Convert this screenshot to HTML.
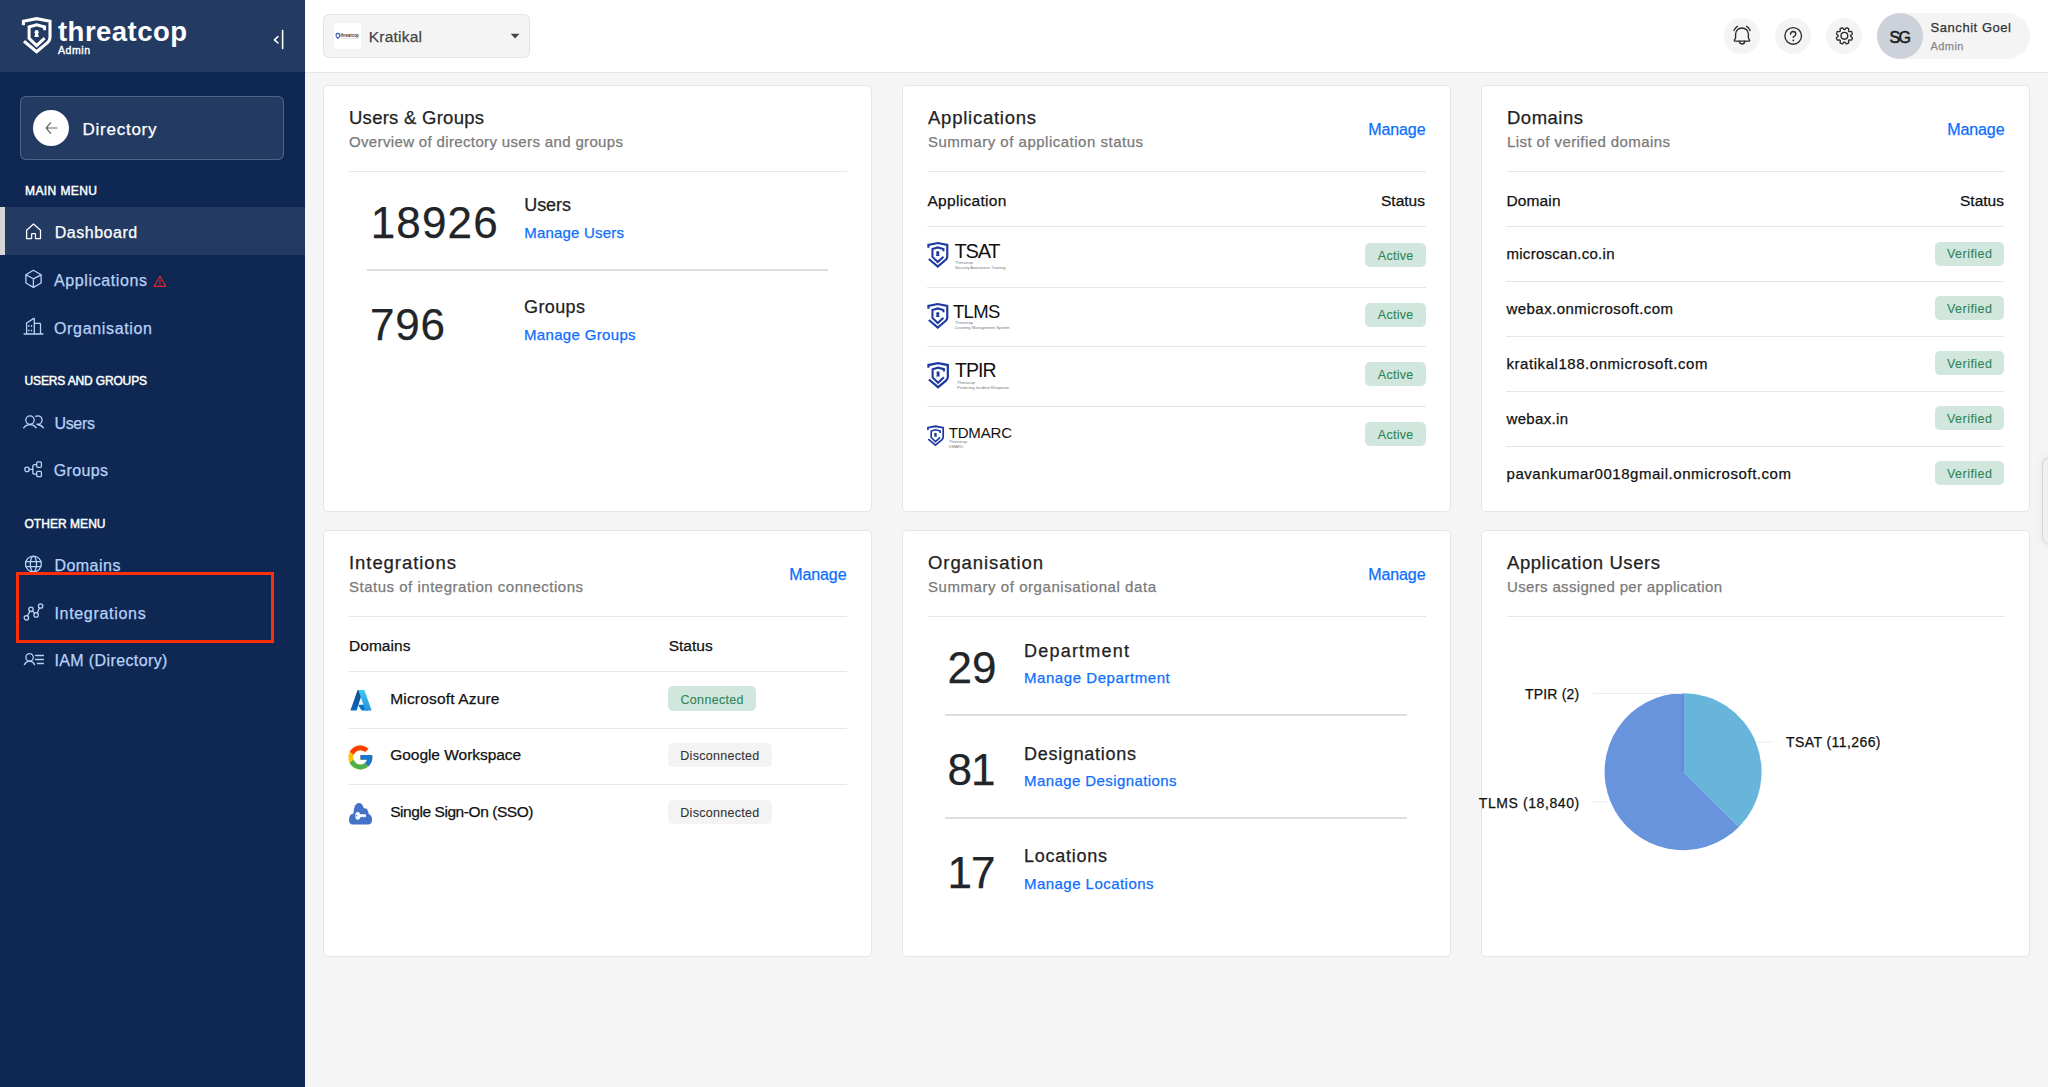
<!DOCTYPE html>
<html><head><meta charset="utf-8"><title>Threatcop Admin - Directory Dashboard</title>
<style>
html,body{margin:0;padding:0;width:2048px;height:1087px;overflow:hidden;background:#f5f5f5;font-family:"Liberation Sans",sans-serif}
.t{position:absolute;white-space:nowrap;-webkit-text-stroke:0.25px currentColor}
svg{overflow:visible}
</style></head><body>
<div style="position:absolute;left:0px;top:0px;width:305px;height:1087px;background:#0f2853"></div>
<div style="position:absolute;left:0px;top:0px;width:305px;height:72px;background:#233a63"></div>
<svg style="position:absolute;left:0;top:0" width="60" height="60" viewBox="0 0 60 60">
<g fill="none" stroke="#fff" stroke-linejoin="miter">
<path d="M23.4 25.2 V21.3 L36.6 18.7 L50 21.3 V37.6 Q50 40.5 47.5 42.6 L36.6 51.8 L24 41.2" stroke-width="3.1"/>
<path d="M44.6 30.3 V27 L36.6 24.9 L29.1 27 V38.3 L36.6 45.6 L44.6 38.2" stroke-width="3"/>
</g>
<circle cx="36.6" cy="32.2" r="2.1" fill="#fff"/>
<path d="M35.5 32.8 H37.7 L38.9 37 H34.3 Z" fill="#fff"/>
</svg>
<div class="t" style="top:18.22px;font-size:27.5px;line-height:27.5px;color:#fff;font-weight:700;-webkit-text-stroke:0;letter-spacing:0.463px;left:58.00px;">threatcop</div>
<div class="t" style="top:45.11px;font-size:10.5px;line-height:10.5px;color:#fff;letter-spacing:0.559px;left:58.00px;-webkit-text-stroke:0.4px #fff">Admin</div>
<svg style="position:absolute;left:268px;top:26px" width="24" height="28" viewBox="0 0 24 28">
<path d="M10 10.5 L6.5 13.8 L10 17" fill="none" stroke="#fff" stroke-width="1.6" stroke-linecap="round" stroke-linejoin="round"/>
<path d="M14.6 4.5 V22.5" stroke="#fff" stroke-width="1.6" stroke-linecap="round"/>
</svg>
<div style="position:absolute;left:20px;top:96px;width:264px;height:64px;background:#233a63;border:1px solid rgba(255,255,255,0.22);border-radius:6px;box-sizing:border-box"></div>
<div style="position:absolute;left:33px;top:110px;width:36px;height:36px;background:#fff;border-radius:50%"></div>
<svg style="position:absolute;left:41px;top:118px" width="20" height="20" viewBox="0 0 20 20">
<path d="M9.6 4.6 L5.2 10 L9.6 15.4 M5.4 10 H16" fill="none" stroke="#666" stroke-width="1.2" stroke-linecap="round" stroke-linejoin="round"/>
</svg>
<div class="t" style="top:120.91px;font-size:17px;line-height:17px;color:#fff;letter-spacing:0.749px;left:82.50px;">Directory</div>
<div class="t" style="top:184.84px;font-size:12px;line-height:12px;color:#fff;letter-spacing:0.417px;left:25.00px;-webkit-text-stroke:0.45px #fff">MAIN MENU</div>
<div style="position:absolute;left:0px;top:207px;width:305px;height:48px;background:#233a63"></div>
<div style="position:absolute;left:0px;top:207px;width:5px;height:48px;background:#d6d6d6"></div>
<svg style="position:absolute;left:20px;top:218px" width="28" height="28" viewBox="0 0 28 28"><g fill="none" stroke="#fff" stroke-width="1.25" stroke-linecap="round" stroke-linejoin="round"><path d="M6.6 20.5 V12.3 L13.5 6 L20.5 12.3 V20.5 H15.5 V16.2 Q15.5 15.6 14.9 15.6 H12.2 Q11.6 15.6 11.6 16.2 V20.5 Z"/></g></svg>
<div class="t" style="top:225.46px;font-size:16px;line-height:16px;color:#fff;letter-spacing:0.528px;left:54.70px;">Dashboard</div>
<svg style="position:absolute;left:20px;top:265px" width="28" height="28" viewBox="0 0 28 28"><g fill="none" stroke="#b8d1f6" stroke-width="1.3" stroke-linecap="round" stroke-linejoin="round"><path d="M13.4 5.3 L21.1 9.8 V18 L13.4 22.4 L5.9 18 V9.8 Z M5.9 9.8 L13.4 13.8 L21.1 9.8 M13.4 13.8 V22.4"/></g></svg>
<div class="t" style="top:273.46px;font-size:16px;line-height:16px;color:#b8d1f6;letter-spacing:0.611px;left:54.00px;">Applications</div>
<svg style="position:absolute;left:152px;top:273px" width="16" height="16" viewBox="0 0 16 16">
<path d="M8 3.3 L13.7 13.3 H2.3 Z" fill="none" stroke="#e0262a" stroke-width="1.2" stroke-linejoin="round"/>
<path d="M8 7 V10" stroke="#e0262a" stroke-width="1.2" stroke-linecap="round"/><circle cx="8" cy="11.7" r="0.7" fill="#e0262a"/>
</svg>
<svg style="position:absolute;left:20px;top:313px" width="28" height="28" viewBox="0 0 28 28"><g fill="none" stroke="#b8d1f6" stroke-width="1.3" stroke-linecap="round" stroke-linejoin="round"><path d="M4.1 21 H22.9 M6.6 21 V10 L13.8 5.4 H14.3 V21 M14.3 10.4 H20 Q20.5 10.4 20.5 11 V21"/><path d="M8.9 12.6 V13.2 M11.5 12.6 V13.2 M8.9 17.2 V17.8 M11.5 17.2 V17.8" stroke-width="1.4"/></g></svg>
<div class="t" style="top:321.06px;font-size:16px;line-height:16px;color:#b8d1f6;letter-spacing:0.662px;left:54.00px;">Organisation</div>
<div class="t" style="top:374.84px;font-size:12px;line-height:12px;color:#fff;letter-spacing:-0.146px;left:24.50px;-webkit-text-stroke:0.45px #fff">USERS AND GROUPS</div>
<svg style="position:absolute;left:20px;top:408px" width="28" height="28" viewBox="0 0 28 28"><g fill="none" stroke="#b8d1f6" stroke-width="1.3" stroke-linecap="round" stroke-linejoin="round"><circle cx="10" cy="12.1" r="4.2"/><path d="M3.6 19.8 Q6 16.6 10 16.6 Q14 16.6 16.2 19.8"/><path d="M15.6 8.3 Q16.6 7.8 17.8 7.8 A4.2 4.2 0 0 1 17.8 16.3 Q17.2 16.3 16.8 16.2"/><path d="M17.6 16.5 Q21.3 16.8 23.4 19.8"/></g></svg>
<div class="t" style="top:416.26px;font-size:16px;line-height:16px;color:#b8d1f6;letter-spacing:-0.295px;left:54.40px;">Users</div>
<svg style="position:absolute;left:20px;top:455px" width="28" height="28" viewBox="0 0 28 28"><g fill="none" stroke="#b8d1f6" stroke-width="1.3" stroke-linecap="round" stroke-linejoin="round"><circle cx="7" cy="14.4" r="2.2"/><path d="M9.2 14.4 H12.8"/><path d="M16.4 9.6 H14.6 Q12.8 9.6 12.8 11.6 V17.2 Q12.8 19.2 14.6 19.2 H16.4"/><rect x="16.7" y="6.9" width="4.7" height="5.4" rx="1"/><rect x="16.7" y="16.3" width="4.7" height="5.4" rx="1"/></g></svg>
<div class="t" style="top:463.26px;font-size:16px;line-height:16px;color:#b8d1f6;letter-spacing:0.346px;left:53.80px;">Groups</div>
<div class="t" style="top:517.54px;font-size:12px;line-height:12px;color:#fff;letter-spacing:0.037px;left:24.50px;-webkit-text-stroke:0.45px #fff">OTHER MENU</div>
<svg style="position:absolute;left:20px;top:550px" width="28" height="28" viewBox="0 0 28 28"><g fill="none" stroke="#b8d1f6" stroke-width="1.3" stroke-linecap="round" stroke-linejoin="round"><circle cx="13.4" cy="14" r="7.9"/><ellipse cx="13.4" cy="14" rx="3.1" ry="7.9"/><path d="M6 11.7 H20.8 M6 16.6 H20.8"/></g></svg>
<div class="t" style="top:558.16px;font-size:16px;line-height:16px;color:#b8d1f6;letter-spacing:0.478px;left:54.40px;">Domains</div>
<svg style="position:absolute;left:20px;top:598px" width="28" height="28" viewBox="0 0 28 28"><g fill="none" stroke="#b8d1f6" stroke-width="1.3" stroke-linecap="round" stroke-linejoin="round"><circle cx="6.4" cy="19.8" r="2.2"/><circle cx="11" cy="11.3" r="2.2"/><circle cx="16.1" cy="16.9" r="2.2"/><circle cx="20.6" cy="8" r="2.2"/><path d="M7.5 17.9 L9.9 13.2 M12.5 12.9 L14.6 15.2 M17.2 15 L19.5 9.9"/></g></svg>
<div class="t" style="top:605.96px;font-size:16px;line-height:16px;color:#b8d1f6;letter-spacing:0.699px;left:54.40px;">Integrations</div>
<svg style="position:absolute;left:20px;top:646px" width="28" height="28" viewBox="0 0 28 28"><g fill="none" stroke="#b8d1f6" stroke-width="1.3" stroke-linecap="round" stroke-linejoin="round"><circle cx="9.6" cy="11.4" r="3.7"/><path d="M4.4 18.6 Q6.4 15.2 9.6 15.2 Q12.8 15.2 14.6 18.6"/><path d="M15.5 9.5 H23.4 M15.5 13.5 H23.4 M17.4 17.5 H23.4"/></g></svg>
<div class="t" style="top:653.46px;font-size:16px;line-height:16px;color:#b8d1f6;letter-spacing:0.389px;left:54.40px;">IAM (Directory)</div>
<div style="position:absolute;left:16px;top:572px;width:258px;height:71px;border:3px solid #ff2d0a;box-sizing:border-box"></div>
<div style="position:absolute;left:305px;top:0px;width:1743px;height:72px;background:#fff"></div>
<div style="position:absolute;left:305px;top:72px;width:1743px;height:1px;background:#e2e6ee"></div>
<div style="position:absolute;left:305px;top:73px;width:1743px;height:1014px;background:#f5f5f5"></div>
<div style="position:absolute;left:323px;top:14px;width:207px;height:44px;background:#f4f4f4;border:1px solid #dfe2ea;border-radius:6px;box-sizing:border-box"></div>
<div style="position:absolute;left:334px;top:23px;width:27px;height:26px;background:#fff"></div>
<svg style="position:absolute;left:334px;top:23px" width="27" height="26" viewBox="0 0 27 26">
<path d="M2.2 10.9 L3.9 10.4 L5.6 10.9 V13.6 L3.9 15.4 L2.2 13.6 Z" fill="none" stroke="#3a5cc4" stroke-width="1.1"/>
<text x="6.5" y="14.3" font-family="Liberation Sans" font-weight="700" font-size="4.6" fill="#333" textLength="18.3" lengthAdjust="spacingAndGlyphs">threatcop</text>
<rect x="6.6" y="15.2" width="18" height="0.45" fill="#bbb"/>
</svg>
<div class="t" style="top:29.08px;font-size:15.5px;line-height:15.5px;color:#444;letter-spacing:0.231px;left:368.70px;">Kratikal</div>
<svg style="position:absolute;left:508px;top:32px" width="14" height="9" viewBox="0 0 14 9"><path d="M2.7 1.8 H11.4 L7.05 6.6 Z" fill="#444"/></svg>
<div style="position:absolute;left:1724px;top:18px;width:36px;height:36px;background:#f4f4f4;border-radius:50%"></div>
<div style="position:absolute;left:1775.4px;top:18px;width:36px;height:36px;background:#f4f4f4;border-radius:50%"></div>
<div style="position:absolute;left:1826.2px;top:18px;width:36px;height:36px;background:#f4f4f4;border-radius:50%"></div>
<svg style="position:absolute;left:1728px;top:22px" width="28" height="28" viewBox="0 0 28 28"><g fill="none" stroke="#2a2a2a" stroke-width="1.35" stroke-linecap="round" stroke-linejoin="round">
<path d="M7.6 16 V12 A6.4 6 0 0 1 20.4 12 V16 L21.6 18.3 Q21.8 19.1 21 19.1 H7 Q6.2 19.1 6.4 18.3 Z"/>
<path d="M11.3 19.3 Q11.6 22 14 22 Q16.4 22 16.8 19.3"/>
<path d="M5.9 8.5 Q7.3 5.6 9.5 4.4 M18.6 4.4 Q20.8 5.6 22.2 8.5"/>
</g></svg>
<svg style="position:absolute;left:1779px;top:22px" width="28" height="28" viewBox="0 0 28 28"><g fill="none" stroke="#2a2a2a" stroke-width="1.35" stroke-linecap="round" stroke-linejoin="round">
<circle cx="14.2" cy="13.9" r="8.3"/>
<path d="M11.5 12.3 Q11.6 9.6 14.2 9.5 Q16.8 9.6 16.8 12 Q16.8 14 14.3 14.8 V15.4"/>
</g><circle cx="14.3" cy="18.4" r="0.85" fill="#2a2a2a"/></svg>
<svg style="position:absolute;left:1830px;top:22px" width="28" height="28" viewBox="0 0 28 28"><g fill="none" stroke="#2a2a2a" stroke-width="1.35" stroke-linecap="round" stroke-linejoin="round">
<path d="M14.40 7.50 L14.51 7.50 L14.62 7.50 L14.73 7.51 L14.84 7.50 L14.96 7.43 L15.08 7.30 L15.22 7.14 L15.36 6.94 L15.52 6.72 L15.69 6.51 L15.86 6.30 L16.03 6.11 L16.21 5.96 L16.38 5.85 L16.54 5.80 L16.69 5.82 L16.83 5.86 L16.96 5.91 L17.10 5.95 L17.24 6.00 L17.37 6.05 L17.51 6.10 L17.64 6.16 L17.78 6.22 L17.91 6.28 L18.04 6.34 L18.17 6.40 L18.30 6.47 L18.42 6.54 L18.54 6.63 L18.62 6.78 L18.66 6.98 L18.68 7.21 L18.67 7.46 L18.65 7.73 L18.61 8.00 L18.57 8.27 L18.53 8.51 L18.51 8.72 L18.51 8.90 L18.54 9.03 L18.62 9.12 L18.70 9.19 L18.78 9.27 L18.85 9.35 L18.93 9.42 L19.01 9.50 L19.08 9.58 L19.17 9.66 L19.30 9.69 L19.48 9.69 L19.69 9.67 L19.93 9.63 L20.20 9.59 L20.47 9.55 L20.74 9.53 L20.99 9.52 L21.22 9.54 L21.42 9.58 L21.57 9.66 L21.66 9.78 L21.73 9.90 L21.80 10.03 L21.86 10.16 L21.92 10.29 L21.98 10.42 L22.04 10.56 L22.10 10.69 L22.15 10.83 L22.20 10.96 L22.25 11.10 L22.29 11.24 L22.34 11.37 L22.38 11.51 L22.40 11.66 L22.35 11.82 L22.24 11.99 L22.09 12.17 L21.90 12.34 L21.69 12.51 L21.48 12.68 L21.26 12.84 L21.06 12.98 L20.90 13.12 L20.77 13.24 L20.70 13.36 L20.69 13.47 L20.70 13.58 L20.70 13.69 L20.70 13.80 L20.70 13.91 L20.70 14.02 L20.69 14.13 L20.70 14.24 L20.77 14.36 L20.90 14.48 L21.06 14.62 L21.26 14.76 L21.48 14.92 L21.69 15.09 L21.90 15.26 L22.09 15.43 L22.24 15.61 L22.35 15.78 L22.40 15.94 L22.38 16.09 L22.34 16.23 L22.29 16.36 L22.25 16.50 L22.20 16.64 L22.15 16.77 L22.10 16.91 L22.04 17.04 L21.98 17.18 L21.92 17.31 L21.86 17.44 L21.80 17.57 L21.73 17.70 L21.66 17.82 L21.57 17.94 L21.42 18.02 L21.22 18.06 L20.99 18.08 L20.74 18.07 L20.47 18.05 L20.20 18.01 L19.93 17.97 L19.69 17.93 L19.48 17.91 L19.30 17.91 L19.17 17.94 L19.08 18.02 L19.01 18.10 L18.93 18.18 L18.85 18.25 L18.78 18.33 L18.70 18.41 L18.62 18.48 L18.54 18.57 L18.51 18.70 L18.51 18.88 L18.53 19.09 L18.57 19.33 L18.61 19.60 L18.65 19.87 L18.67 20.14 L18.68 20.39 L18.66 20.62 L18.62 20.82 L18.54 20.97 L18.42 21.06 L18.30 21.13 L18.17 21.20 L18.04 21.26 L17.91 21.32 L17.78 21.38 L17.64 21.44 L17.51 21.50 L17.37 21.55 L17.24 21.60 L17.10 21.65 L16.96 21.69 L16.83 21.74 L16.69 21.78 L16.54 21.80 L16.38 21.75 L16.21 21.64 L16.03 21.49 L15.86 21.30 L15.69 21.09 L15.52 20.88 L15.36 20.66 L15.22 20.46 L15.08 20.30 L14.96 20.17 L14.84 20.10 L14.73 20.09 L14.62 20.10 L14.51 20.10 L14.40 20.10 L14.29 20.10 L14.18 20.10 L14.07 20.09 L13.96 20.10 L13.84 20.17 L13.72 20.30 L13.58 20.46 L13.44 20.66 L13.28 20.88 L13.11 21.09 L12.94 21.30 L12.77 21.49 L12.59 21.64 L12.42 21.75 L12.26 21.80 L12.11 21.78 L11.97 21.74 L11.84 21.69 L11.70 21.65 L11.56 21.60 L11.43 21.55 L11.29 21.50 L11.16 21.44 L11.02 21.38 L10.89 21.32 L10.76 21.26 L10.63 21.20 L10.50 21.13 L10.38 21.06 L10.26 20.97 L10.18 20.82 L10.14 20.62 L10.12 20.39 L10.13 20.14 L10.15 19.87 L10.19 19.60 L10.23 19.33 L10.27 19.09 L10.29 18.88 L10.29 18.70 L10.26 18.57 L10.18 18.48 L10.10 18.41 L10.02 18.33 L9.95 18.25 L9.87 18.18 L9.79 18.10 L9.72 18.02 L9.63 17.94 L9.50 17.91 L9.32 17.91 L9.11 17.93 L8.87 17.97 L8.60 18.01 L8.33 18.05 L8.06 18.07 L7.81 18.08 L7.58 18.06 L7.38 18.02 L7.23 17.94 L7.14 17.82 L7.07 17.70 L7.00 17.57 L6.94 17.44 L6.88 17.31 L6.82 17.18 L6.76 17.04 L6.70 16.91 L6.65 16.77 L6.60 16.64 L6.55 16.50 L6.51 16.36 L6.46 16.23 L6.42 16.09 L6.40 15.94 L6.45 15.78 L6.56 15.61 L6.71 15.43 L6.90 15.26 L7.11 15.09 L7.32 14.92 L7.54 14.76 L7.74 14.62 L7.90 14.48 L8.03 14.36 L8.10 14.24 L8.11 14.13 L8.10 14.02 L8.10 13.91 L8.10 13.80 L8.10 13.69 L8.10 13.58 L8.11 13.47 L8.10 13.36 L8.03 13.24 L7.90 13.12 L7.74 12.98 L7.54 12.84 L7.32 12.68 L7.11 12.51 L6.90 12.34 L6.71 12.17 L6.56 11.99 L6.45 11.82 L6.40 11.66 L6.42 11.51 L6.46 11.37 L6.51 11.24 L6.55 11.10 L6.60 10.96 L6.65 10.83 L6.70 10.69 L6.76 10.56 L6.82 10.42 L6.88 10.29 L6.94 10.16 L7.00 10.03 L7.07 9.90 L7.14 9.78 L7.23 9.66 L7.38 9.58 L7.58 9.54 L7.81 9.52 L8.06 9.53 L8.33 9.55 L8.60 9.59 L8.87 9.63 L9.11 9.67 L9.32 9.69 L9.50 9.69 L9.63 9.66 L9.72 9.58 L9.79 9.50 L9.87 9.42 L9.95 9.35 L10.02 9.27 L10.10 9.19 L10.18 9.12 L10.26 9.03 L10.29 8.90 L10.29 8.72 L10.27 8.51 L10.23 8.27 L10.19 8.00 L10.15 7.73 L10.13 7.46 L10.12 7.21 L10.14 6.98 L10.18 6.78 L10.26 6.63 L10.38 6.54 L10.50 6.47 L10.63 6.40 L10.76 6.34 L10.89 6.28 L11.02 6.22 L11.16 6.16 L11.29 6.10 L11.43 6.05 L11.56 6.00 L11.70 5.95 L11.84 5.91 L11.97 5.86 L12.11 5.82 L12.26 5.80 L12.42 5.85 L12.59 5.96 L12.77 6.11 L12.94 6.30 L13.11 6.51 L13.28 6.72 L13.44 6.94 L13.58 7.14 L13.72 7.30 L13.84 7.43 L13.96 7.50 L14.07 7.51 L14.18 7.50 L14.29 7.50 Z"/><circle cx="14.4" cy="13.8" r="3.4"/></g></svg>
<div style="position:absolute;left:1877px;top:13px;width:153px;height:46px;background:#f4f4f4;border-radius:23px"></div>
<div style="position:absolute;left:1877px;top:13px;width:46px;height:46px;background:#cdd2da;border-radius:50%"></div>
<div class="t" style="top:29.76px;font-size:16px;line-height:16px;color:#1a1a1a;letter-spacing:-1.617px;left:1889.50px;-webkit-text-stroke:0.55px #1a1a1a">SG</div>
<div class="t" style="top:21.00px;font-size:13px;line-height:13px;color:#333;letter-spacing:0.542px;left:1930.60px;">Sanchit Goel</div>
<div class="t" style="top:41.19px;font-size:11px;line-height:11px;color:#888;letter-spacing:0.405px;left:1930.60px;">Admin</div>
<div style="position:absolute;left:323px;top:85px;width:549px;height:427px;background:#fff;border:1px solid #e3e6ee;border-radius:5px;box-sizing:border-box"></div>
<div style="position:absolute;left:902px;top:85px;width:549px;height:427px;background:#fff;border:1px solid #e3e6ee;border-radius:5px;box-sizing:border-box"></div>
<div style="position:absolute;left:1481px;top:85px;width:549px;height:427px;background:#fff;border:1px solid #e3e6ee;border-radius:5px;box-sizing:border-box"></div>
<div style="position:absolute;left:323px;top:530px;width:549px;height:427px;background:#fff;border:1px solid #e3e6ee;border-radius:5px;box-sizing:border-box"></div>
<div style="position:absolute;left:902px;top:530px;width:549px;height:427px;background:#fff;border:1px solid #e3e6ee;border-radius:5px;box-sizing:border-box"></div>
<div style="position:absolute;left:1481px;top:530px;width:549px;height:427px;background:#fff;border:1px solid #e3e6ee;border-radius:5px;box-sizing:border-box"></div>
<div class="t" style="top:108.94px;font-size:18.5px;line-height:18.5px;color:#222;letter-spacing:0.262px;left:349.00px;">Users &amp; Groups</div>
<div class="t" style="top:133.90px;font-size:15px;line-height:15px;color:#7a7a7a;letter-spacing:0.353px;left:349.00px;">Overview of directory users and groups</div>
<div style="position:absolute;left:349px;top:171px;width:498px;height:1px;background:#e3e7f0"></div>
<div class="t" style="top:201.05px;font-size:44px;line-height:44px;color:#212529;letter-spacing:1.161px;left:370.70px;">18926</div>
<div class="t" style="top:196.26px;font-size:18px;line-height:18px;color:#222;letter-spacing:-0.051px;left:524.20px;">Users</div>
<div class="t" style="top:225.30px;font-size:15px;line-height:15px;color:#0d6efd;letter-spacing:0.205px;left:524.20px;">Manage Users</div>
<div style="position:absolute;left:367px;top:269px;width:461px;height:2px;background:#dedede"></div>
<div class="t" style="top:303.35px;font-size:44px;line-height:44px;color:#212529;letter-spacing:0.794px;left:370.00px;">796</div>
<div class="t" style="top:298.06px;font-size:18px;line-height:18px;color:#222;letter-spacing:0.394px;left:524.00px;">Groups</div>
<div class="t" style="top:327.10px;font-size:15px;line-height:15px;color:#0d6efd;letter-spacing:0.336px;left:524.00px;">Manage Groups</div>
<div class="t" style="top:108.94px;font-size:18.5px;line-height:18.5px;color:#222;letter-spacing:0.750px;left:928.00px;">Applications</div>
<div class="t" style="top:133.90px;font-size:15px;line-height:15px;color:#7a7a7a;letter-spacing:0.503px;left:928.00px;">Summary of application status</div>
<div class="t" style="top:121.76px;font-size:16px;line-height:16px;color:#0d6efd;letter-spacing:-0.084px;left:1368.20px;">Manage</div>
<div style="position:absolute;left:928px;top:171px;width:498px;height:1px;background:#e3e7f0"></div>
<div class="t" style="top:193.38px;font-size:15.5px;line-height:15.5px;color:#111;letter-spacing:0.317px;left:927.40px;">Application</div>
<div class="t" style="top:193.18px;font-size:15.5px;line-height:15.5px;color:#111;letter-spacing:0.012px;left:1381.00px;">Status</div>
<div style="position:absolute;left:927px;top:226px;width:499px;height:1px;background:#e4e7ec"></div>
<div style="position:absolute;left:927px;top:287px;width:499px;height:1px;background:#e4e7ec"></div>
<div style="position:absolute;left:927px;top:346px;width:499px;height:1px;background:#e4e7ec"></div>
<div style="position:absolute;left:927px;top:406px;width:499px;height:1px;background:#e4e7ec"></div>
<div style="position:absolute;left:1365px;top:243px;width:61px;height:24px;background:#d1e7dd;border-radius:5px"></div>
<div class="t" style="top:249.62px;font-size:12.5px;line-height:12.5px;color:#2e8457;letter-spacing:0.252px;left:1377.85px;-webkit-text-stroke:0.1px currentColor">Active</div>
<div style="position:absolute;left:1365px;top:302.5px;width:61px;height:24px;background:#d1e7dd;border-radius:5px"></div>
<div class="t" style="top:309.12px;font-size:12.5px;line-height:12.5px;color:#2e8457;letter-spacing:0.252px;left:1377.85px;-webkit-text-stroke:0.1px currentColor">Active</div>
<div style="position:absolute;left:1365px;top:362px;width:61px;height:24px;background:#d1e7dd;border-radius:5px"></div>
<div class="t" style="top:368.62px;font-size:12.5px;line-height:12.5px;color:#2e8457;letter-spacing:0.252px;left:1377.85px;-webkit-text-stroke:0.1px currentColor">Active</div>
<div style="position:absolute;left:1365px;top:422px;width:61px;height:24px;background:#d1e7dd;border-radius:5px"></div>
<div class="t" style="top:428.62px;font-size:12.5px;line-height:12.5px;color:#2e8457;letter-spacing:0.252px;left:1377.85px;-webkit-text-stroke:0.1px currentColor">Active</div>
<svg style="position:absolute;left:925.5px;top:239px" width="23.400000000000002" height="31.200000000000003" viewBox="20 15 33 40">
<g fill="none" stroke="#1d3aa0" stroke-linejoin="miter">
<path d="M23.4 25.2 V21.3 L36.6 18.7 L50 21.3 V37.6 Q50 40.5 47.5 42.6 L36.6 51.8 L24 41.2" stroke-width="3.1"/>
<path d="M44.6 30.3 V27 L36.6 24.9 L29.1 27 V38.3 L36.6 45.6 L44.6 38.2" stroke-width="2.9"/>
</g><circle cx="36.6" cy="32.2" r="2.3" fill="#1d3aa0"/><path d="M35.3 32.8 H37.9 L39.1 37 H34.1 Z" fill="#1d3aa0"/></svg>
<div class="t" style="top:241.47px;font-size:20px;line-height:20px;color:#111;letter-spacing:-1.210px;left:954.50px;-webkit-text-stroke:0">TSAT</div>
<div class="t" style="top:261.11px;font-size:4px;line-height:4px;color:#777;left:955.00px;-webkit-text-stroke:0">Threatcop</div>
<div class="t" style="top:266.11px;font-size:4px;line-height:4px;color:#777;left:955.00px;-webkit-text-stroke:0">Security Awareness Training</div>
<svg style="position:absolute;left:925.5px;top:300px" width="23.400000000000002" height="31.200000000000003" viewBox="20 15 33 40">
<g fill="none" stroke="#1d3aa0" stroke-linejoin="miter">
<path d="M23.4 25.2 V21.3 L36.6 18.7 L50 21.3 V37.6 Q50 40.5 47.5 42.6 L36.6 51.8 L24 41.2" stroke-width="3.1"/>
<path d="M44.6 30.3 V27 L36.6 24.9 L29.1 27 V38.3 L36.6 45.6 L44.6 38.2" stroke-width="2.9"/>
</g><circle cx="36.6" cy="32.2" r="2.3" fill="#1d3aa0"/><path d="M35.3 32.8 H37.9 L39.1 37 H34.1 Z" fill="#1d3aa0"/></svg>
<div class="t" style="top:302.64px;font-size:18.5px;line-height:18.5px;color:#111;letter-spacing:-0.680px;left:953.00px;-webkit-text-stroke:0">TLMS</div>
<div class="t" style="top:321.11px;font-size:4px;line-height:4px;color:#777;left:955.00px;-webkit-text-stroke:0">Threatcop</div>
<div class="t" style="top:326.11px;font-size:4px;line-height:4px;color:#777;left:955.00px;-webkit-text-stroke:0">Learning Management System</div>
<svg style="position:absolute;left:925.5px;top:359px" width="24.0" height="32.0" viewBox="20 15 33 40">
<g fill="none" stroke="#1d3aa0" stroke-linejoin="miter">
<path d="M23.4 25.2 V21.3 L36.6 18.7 L50 21.3 V37.6 Q50 40.5 47.5 42.6 L36.6 51.8 L24 41.2" stroke-width="3.1"/>
<path d="M44.6 30.3 V27 L36.6 24.9 L29.1 27 V38.3 L36.6 45.6 L44.6 38.2" stroke-width="2.9"/>
</g><circle cx="36.6" cy="32.2" r="2.3" fill="#1d3aa0"/><path d="M35.3 32.8 H37.9 L39.1 37 H34.1 Z" fill="#1d3aa0"/></svg>
<div class="t" style="top:361.29px;font-size:19.5px;line-height:19.5px;color:#111;letter-spacing:-0.939px;left:955.00px;-webkit-text-stroke:0">TPIR</div>
<div class="t" style="top:380.61px;font-size:4px;line-height:4px;color:#777;left:957.00px;-webkit-text-stroke:0">Threatcop</div>
<div class="t" style="top:385.61px;font-size:4px;line-height:4px;color:#777;left:957.00px;-webkit-text-stroke:0">Predicting Incident Response</div>
<svg style="position:absolute;left:925.5px;top:422.5px" width="18.9" height="25.2" viewBox="20 15 33 40">
<g fill="none" stroke="#1d3aa0" stroke-linejoin="miter">
<path d="M23.4 25.2 V21.3 L36.6 18.7 L50 21.3 V37.6 Q50 40.5 47.5 42.6 L36.6 51.8 L24 41.2" stroke-width="3.1"/>
<path d="M44.6 30.3 V27 L36.6 24.9 L29.1 27 V38.3 L36.6 45.6 L44.6 38.2" stroke-width="2.9"/>
</g><circle cx="36.6" cy="32.2" r="2.3" fill="#1d3aa0"/><path d="M35.3 32.8 H37.9 L39.1 37 H34.1 Z" fill="#1d3aa0"/></svg>
<div class="t" style="top:425.20px;font-size:15px;line-height:15px;color:#111;letter-spacing:-0.172px;left:948.70px;-webkit-text-stroke:0">TDMARC</div>
<div class="t" style="top:439.61px;font-size:4px;line-height:4px;color:#777;left:949.00px;-webkit-text-stroke:0">Threatcop</div>
<div class="t" style="top:444.61px;font-size:4px;line-height:4px;color:#777;left:949.00px;-webkit-text-stroke:0">DMARC</div>
<div class="t" style="top:108.94px;font-size:18.5px;line-height:18.5px;color:#222;letter-spacing:0.500px;left:1507.00px;">Domains</div>
<div class="t" style="top:133.90px;font-size:15px;line-height:15px;color:#7a7a7a;letter-spacing:0.417px;left:1507.00px;">List of verified domains</div>
<div class="t" style="top:121.76px;font-size:16px;line-height:16px;color:#0d6efd;letter-spacing:-0.084px;left:1947.20px;">Manage</div>
<div style="position:absolute;left:1507px;top:171px;width:498px;height:1px;background:#e3e7f0"></div>
<div class="t" style="top:193.38px;font-size:15.5px;line-height:15.5px;color:#111;letter-spacing:0.118px;left:1506.50px;">Domain</div>
<div class="t" style="top:193.18px;font-size:15.5px;line-height:15.5px;color:#111;letter-spacing:0.012px;left:1960.00px;">Status</div>
<div style="position:absolute;left:1506px;top:226px;width:498px;height:1px;background:#e4e7ec"></div>
<div style="position:absolute;left:1506px;top:281px;width:498px;height:1px;background:#e4e7ec"></div>
<div style="position:absolute;left:1506px;top:336px;width:498px;height:1px;background:#e4e7ec"></div>
<div style="position:absolute;left:1506px;top:391px;width:498px;height:1px;background:#e4e7ec"></div>
<div style="position:absolute;left:1506px;top:446px;width:498px;height:1px;background:#e4e7ec"></div>
<div class="t" style="top:246.00px;font-size:15px;line-height:15px;color:#111;letter-spacing:0.271px;left:1506.50px;">microscan.co.in</div>
<div style="position:absolute;left:1935px;top:241.5px;width:69px;height:24px;background:#d1e7dd;border-radius:5px"></div>
<div class="t" style="top:248.12px;font-size:12.5px;line-height:12.5px;color:#2e8457;letter-spacing:0.472px;left:1947.00px;-webkit-text-stroke:0.1px currentColor">Verified</div>
<div class="t" style="top:300.90px;font-size:15px;line-height:15px;color:#111;letter-spacing:0.447px;left:1506.50px;">webax.onmicrosoft.com</div>
<div style="position:absolute;left:1935px;top:296.4px;width:69px;height:24px;background:#d1e7dd;border-radius:5px"></div>
<div class="t" style="top:303.02px;font-size:12.5px;line-height:12.5px;color:#2e8457;letter-spacing:0.472px;left:1947.00px;-webkit-text-stroke:0.1px currentColor">Verified</div>
<div class="t" style="top:355.80px;font-size:15px;line-height:15px;color:#111;letter-spacing:0.548px;left:1506.50px;">kratikal188.onmicrosoft.com</div>
<div style="position:absolute;left:1935px;top:351.3px;width:69px;height:24px;background:#d1e7dd;border-radius:5px"></div>
<div class="t" style="top:357.92px;font-size:12.5px;line-height:12.5px;color:#2e8457;letter-spacing:0.472px;left:1947.00px;-webkit-text-stroke:0.1px currentColor">Verified</div>
<div class="t" style="top:410.70px;font-size:15px;line-height:15px;color:#111;letter-spacing:0.328px;left:1506.50px;">webax.in</div>
<div style="position:absolute;left:1935px;top:406.2px;width:69px;height:24px;background:#d1e7dd;border-radius:5px"></div>
<div class="t" style="top:412.82px;font-size:12.5px;line-height:12.5px;color:#2e8457;letter-spacing:0.472px;left:1947.00px;-webkit-text-stroke:0.1px currentColor">Verified</div>
<div class="t" style="top:465.60px;font-size:15px;line-height:15px;color:#111;letter-spacing:0.545px;left:1506.50px;">pavankumar0018gmail.onmicrosoft.com</div>
<div style="position:absolute;left:1935px;top:461.1px;width:69px;height:24px;background:#d1e7dd;border-radius:5px"></div>
<div class="t" style="top:467.72px;font-size:12.5px;line-height:12.5px;color:#2e8457;letter-spacing:0.472px;left:1947.00px;-webkit-text-stroke:0.1px currentColor">Verified</div>
<div class="t" style="top:553.94px;font-size:18.5px;line-height:18.5px;color:#222;letter-spacing:0.939px;left:349.00px;">Integrations</div>
<div class="t" style="top:578.90px;font-size:15px;line-height:15px;color:#7a7a7a;letter-spacing:0.511px;left:349.00px;">Status of integration connections</div>
<div class="t" style="top:566.76px;font-size:16px;line-height:16px;color:#0d6efd;letter-spacing:-0.084px;left:789.20px;">Manage</div>
<div style="position:absolute;left:349px;top:616px;width:498px;height:1px;background:#e3e7f0"></div>
<div class="t" style="top:638.18px;font-size:15.5px;line-height:15.5px;color:#111;letter-spacing:0.040px;left:349.00px;">Domains</div>
<div class="t" style="top:638.18px;font-size:15.5px;line-height:15.5px;color:#111;letter-spacing:0.012px;left:668.70px;">Status</div>
<div style="position:absolute;left:349px;top:671px;width:498px;height:1px;background:#e4e7ec"></div>
<div style="position:absolute;left:349px;top:728px;width:498px;height:1px;background:#e4e7ec"></div>
<div style="position:absolute;left:349px;top:784px;width:498px;height:1px;background:#e4e7ec"></div>
<div class="t" style="top:690.88px;font-size:15.5px;line-height:15.5px;color:#111;letter-spacing:0.178px;left:390.20px;">Microsoft Azure</div>
<div class="t" style="top:747.08px;font-size:15.5px;line-height:15.5px;color:#111;letter-spacing:-0.035px;left:390.20px;">Google Workspace</div>
<div class="t" style="top:803.78px;font-size:15.5px;line-height:15.5px;color:#111;letter-spacing:-0.438px;left:390.20px;">Single Sign-On (SSO)</div>
<div style="position:absolute;left:668px;top:686px;width:88px;height:24.5px;background:#d1e7dd;border-radius:5px"></div>
<div class="t" style="top:693.62px;font-size:12.5px;line-height:12.5px;color:#2e8457;letter-spacing:0.317px;left:680.50px;-webkit-text-stroke:0.1px currentColor">Connected</div>
<div style="position:absolute;left:668px;top:743px;width:103.5px;height:24px;background:#f3f3f3;border-radius:5px"></div>
<div class="t" style="top:750.42px;font-size:12.5px;line-height:12.5px;color:#333;letter-spacing:0.296px;left:680.25px;-webkit-text-stroke:0.1px currentColor">Disconnected</div>
<div style="position:absolute;left:668px;top:800px;width:103.5px;height:24px;background:#f3f3f3;border-radius:5px"></div>
<div class="t" style="top:807.42px;font-size:12.5px;line-height:12.5px;color:#333;letter-spacing:0.296px;left:680.25px;-webkit-text-stroke:0.1px currentColor">Disconnected</div>
<svg style="position:absolute;left:349px;top:689px" width="24" height="23" viewBox="0 0 24 23">
<defs><linearGradient id="az1" x1="0" y1="0" x2="0" y2="1"><stop offset="0" stop-color="#114a8b"/><stop offset="1" stop-color="#0669bc"/></linearGradient>
<linearGradient id="az2" x1="0" y1="0" x2="0" y2="1"><stop offset="0" stop-color="#3ccbf4"/><stop offset="1" stop-color="#2892df"/></linearGradient></defs>
<path d="M8.6 1 H14.2 L7.6 21.6 H1.4 Z" fill="url(#az1)"/>
<path d="M9 15.8 H16.6 L19.5 21.6 H12.6 Z" fill="#0078d4"/>
<path d="M9.4 1 H14.8 Q15.4 1 15.6 1.6 L22.6 21.6 H16.4 L9.4 1.6 Z" fill="url(#az2)"/>
</svg>
<svg style="position:absolute;left:346.3px;top:742.6px" width="28.8" height="28.8" viewBox="0 0 48 48">
<path fill="#FFC107" d="M43.6 20.1H42V20H24v8h11.3C33.7 32.7 29.2 36 24 36c-6.6 0-12-5.4-12-12s5.4-12 12-12c3.1 0 5.8 1.2 7.9 3.1l5.7-5.7C34 6.1 29.3 4 24 4 13 4 4 13 4 24s9 20 20 20 20-9 20-20c0-1.3-.1-2.6-.4-3.9z"/>
<path fill="#FF3D00" d="M6.3 14.7l6.6 4.8C14.7 15.1 19 12 24 12c3.1 0 5.8 1.2 7.9 3.1l5.7-5.7C34 6.1 29.3 4 24 4 16.3 4 9.7 8.3 6.3 14.7z"/>
<path fill="#4CAF50" d="M24 44c5.2 0 9.9-2 13.4-5.2l-6.2-5.2C29.2 35.1 26.7 36 24 36c-5.2 0-9.6-3.3-11.3-8l-6.5 5C9.5 39.6 16.2 44 24 44z"/>
<path fill="#1976D2" d="M43.6 20.1H42V20H24v8h11.3c-.8 2.2-2.2 4.2-4.1 5.6l6.2 5.2C37 39.2 44 34 44 24c0-1.3-.1-2.6-.4-3.9z"/>
</svg>
<svg style="position:absolute;left:348px;top:802px" width="26" height="24" viewBox="0 0 26 24">
<path d="M4.6 22.6 Q1 22.6 1 17.6 Q1.1 12.3 5.4 11.6 Q6 1 10.6 1 Q14.6 1 15.8 6.3 Q20 5.6 20.6 11.8 Q24 13.2 24 17.6 Q24 22.6 20 22.6 Z" fill="#4472c9"/>
<ellipse cx="9.8" cy="13.8" rx="2.5" ry="3.9" fill="#fff"/>
<path d="M11.5 12.3 H17.2 Q18 12.3 18 13.2 V14.4 L17 15.4 L16.2 14.6 L15.3 15.4 L14.4 14.6 L13.5 15.3 H11.5 Z" fill="#fff"/>
<circle cx="8.8" cy="13.8" r="0.8" fill="#4472c9"/>
</svg>
<div class="t" style="top:553.94px;font-size:18.5px;line-height:18.5px;color:#222;letter-spacing:0.919px;left:928.00px;">Organisation</div>
<div class="t" style="top:578.90px;font-size:15px;line-height:15px;color:#7a7a7a;letter-spacing:0.559px;left:928.00px;">Summary of organisational data</div>
<div class="t" style="top:566.76px;font-size:16px;line-height:16px;color:#0d6efd;letter-spacing:-0.084px;left:1368.20px;">Manage</div>
<div style="position:absolute;left:928px;top:616px;width:498px;height:1px;background:#e3e7f0"></div>
<div class="t" style="top:645.75px;font-size:44px;line-height:44px;color:#212529;letter-spacing:0.058px;left:947.50px;">29</div>
<div class="t" style="top:641.96px;font-size:18px;line-height:18px;color:#222;letter-spacing:1.217px;left:1024.00px;">Department</div>
<div class="t" style="top:670.30px;font-size:15px;line-height:15px;color:#0d6efd;letter-spacing:0.560px;left:1024.00px;">Manage Department</div>
<div class="t" style="top:748.45px;font-size:44px;line-height:44px;color:#212529;letter-spacing:-0.942px;left:947.50px;">81</div>
<div class="t" style="top:744.66px;font-size:18px;line-height:18px;color:#222;letter-spacing:0.722px;left:1024.00px;">Designations</div>
<div class="t" style="top:773.00px;font-size:15px;line-height:15px;color:#0d6efd;letter-spacing:0.411px;left:1024.00px;">Manage Designations</div>
<div class="t" style="top:851.15px;font-size:44px;line-height:44px;color:#212529;letter-spacing:-0.942px;left:947.50px;">17</div>
<div class="t" style="top:847.36px;font-size:18px;line-height:18px;color:#222;letter-spacing:0.743px;left:1024.00px;">Locations</div>
<div class="t" style="top:875.70px;font-size:15px;line-height:15px;color:#0d6efd;letter-spacing:0.461px;left:1024.00px;">Manage Locations</div>
<div style="position:absolute;left:945px;top:714px;width:462px;height:2px;background:#dedede"></div>
<div style="position:absolute;left:945px;top:817px;width:462px;height:2px;background:#dedede"></div>
<div class="t" style="top:553.94px;font-size:18.5px;line-height:18.5px;color:#222;letter-spacing:0.565px;left:1507.00px;">Application Users</div>
<div class="t" style="top:578.90px;font-size:15px;line-height:15px;color:#7a7a7a;letter-spacing:0.341px;left:1507.00px;">Users assigned per application</div>
<div style="position:absolute;left:1507px;top:616px;width:498px;height:1px;background:#e3e7f0"></div>
<svg style="position:absolute;left:0;top:0" width="2048" height="1087" viewBox="0 0 2048 1087">
<path d="M1683.1 771.7 L1683.10 693.20 A78.5 78.5 0 0 1 1738.89 826.92 Z" fill="#68b5dc"/>
<path d="M1683.1 771.7 L1738.89 826.92 A78.5 78.5 0 1 1 1683.07 693.20 Z" fill="#6794dc"/>
<path d="M1683.1 771.7 V693.2" stroke="#6b6fd8" stroke-width="1"/>
<path d="M1593 693.5 H1683 M1757 742 H1773.5 M1593 801.8 H1609" stroke="#ececec" stroke-width="1"/>
</svg>
<div class="t" style="top:686.95px;font-size:14px;line-height:14px;color:#111;letter-spacing:0.187px;left:1525.00px;">TPIR (2)</div>
<div class="t" style="top:735.45px;font-size:14px;line-height:14px;color:#111;letter-spacing:0.418px;left:1786.00px;">TSAT (11,266)</div>
<div class="t" style="top:795.65px;font-size:14px;line-height:14px;color:#111;letter-spacing:0.586px;left:1478.80px;">TLMS (18,840)</div>
<div style="position:absolute;left:2041.5px;top:457px;width:20px;height:88px;background:#efefef;border:1px solid #d6d6d6;border-radius:8px;box-sizing:border-box;box-shadow:0 0 10px rgba(0,0,0,0.07)"></div>
</body></html>
